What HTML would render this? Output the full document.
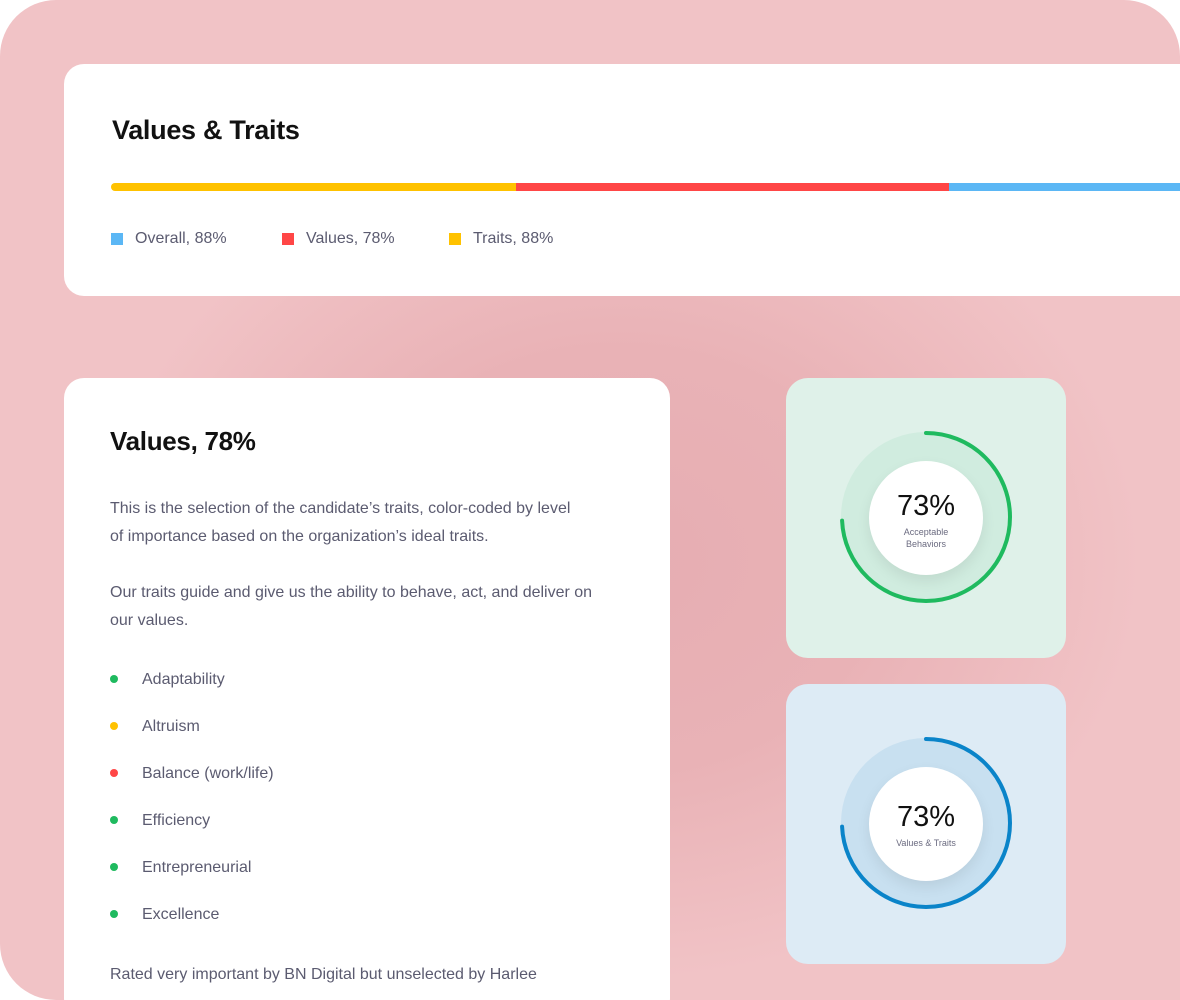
<!DOCTYPE html>
<html><head><meta charset="utf-8"><style>
*{margin:0;padding:0;box-sizing:border-box}
html,body{width:1180px;height:1000px;overflow:hidden;background:#fff}
body{font-family:"Liberation Sans",sans-serif}
.bg{position:absolute;left:0;top:0;width:1180px;height:1000px;border-radius:56px 56px 0 56px;
background:radial-gradient(ellipse 520px 420px at 620px 560px,#e6adb2 0%,#e9b2b6 50%,#f1c3c6 100%);overflow:hidden}
.card{position:absolute;background:#fff}
.c1{left:64px;top:64px;width:1140px;height:232px;border-radius:20px}
h1{position:absolute;font-size:27px;font-weight:bold;color:#111;letter-spacing:-0.3px}
.bar{position:absolute;left:111px;top:183px;height:8px;width:1100px;display:flex;border-radius:4px;overflow:hidden}
.leg{position:absolute;top:231px;font-size:16px;color:#5b5b70}
.leg i{position:absolute;left:0;top:2px;width:12px;height:12px}
.leg span{position:absolute;left:24px;top:-1px;white-space:nowrap}
.c2{left:64px;top:378px;width:606px;height:640px;border-radius:20px}
p{position:absolute;left:110px;font-size:16px;color:#5b5b70;line-height:28px;width:500px}
.li{position:absolute;left:110px;font-size:16px;color:#5b5b70}
.li i{position:absolute;left:0;top:4px;width:8px;height:8px;border-radius:50%}
.li span{position:absolute;left:32px;top:0;white-space:nowrap}
.rc{position:absolute;left:786px;width:280px;height:280px;border-radius:22px}
.rc svg{position:absolute;left:0;top:0}
.in{position:absolute;left:83px;top:83px;width:114px;height:114px;border-radius:50%;background:#fff;box-shadow:0 6px 14px rgba(0,0,0,0.08);text-align:center}
.in b{display:block;font-size:29px;font-weight:normal;color:#111;margin-top:29px;line-height:32px}
.in small{display:block;font-size:9px;color:#6b6b80;line-height:12px;margin-top:4px}
</style></head><body>
<div class="bg">
<div class="card c1">
</div>
<h1 style="left:112px;top:115px">Values &amp; Traits</h1>
<div class="bar"><div style="width:405px;background:#ffc200"></div><div style="width:433px;background:#ff4646"></div><div style="flex:1;background:#5bb7f5"></div></div>
<div class="leg" style="left:111px"><i style="background:#5bb7f5"></i><span>Overall, 88%</span></div>
<div class="leg" style="left:282px"><i style="background:#ff4646"></i><span>Values, 78%</span></div>
<div class="leg" style="left:449px"><i style="background:#ffc200"></i><span>Traits, 88%</span></div>

<div class="card c2"></div>
<h1 style="left:110px;top:426px;font-size:26px">Values, 78%</h1>
<p style="top:495px;width:472px">This is the selection of the candidate’s traits, color-coded by level of importance based on the organization’s ideal traits.</p>
<p style="top:579px">Our traits guide and give us the ability to behave, act, and deliver on our values.</p>
<div class="li" style="top:671px"><i style="background:#1fba5f"></i><span>Adaptability</span></div>
<div class="li" style="top:718px"><i style="background:#ffc200"></i><span>Altruism</span></div>
<div class="li" style="top:765px"><i style="background:#ff4646"></i><span>Balance (work/life)</span></div>
<div class="li" style="top:812px"><i style="background:#1fba5f"></i><span>Efficiency</span></div>
<div class="li" style="top:859px"><i style="background:#1fba5f"></i><span>Entrepreneurial</span></div>
<div class="li" style="top:906px"><i style="background:#1fba5f"></i><span>Excellence</span></div>
<p style="top:961px;width:560px">Rated very important by BN Digital but unselected by Harlee</p>

<div class="rc" style="top:378px;background:#dff1e9">
<svg width="280" height="280"><circle cx="140" cy="139" r="85" fill="#d0ecdf"/>
<circle cx="140" cy="139" r="84" fill="none" stroke="#1fba5f" stroke-width="4" stroke-linecap="round" stroke-dasharray="392 600" transform="rotate(-90 140 139)"/></svg>
<div class="in"><b>73%</b><small>Acceptable<br>Behaviors</small></div>
</div>
<div class="rc" style="top:684px;background:#ddebf5">
<svg width="280" height="280"><circle cx="140" cy="139" r="85" fill="#c8e0f0"/>
<circle cx="140" cy="139" r="84" fill="none" stroke="#0a84c9" stroke-width="4" stroke-linecap="round" stroke-dasharray="392 600" transform="rotate(-90 140 139)"/></svg>
<div class="in"><b style="margin-top:34px">73%</b><small>Values &amp; Traits</small></div>
</div>
</div>
</body></html>
